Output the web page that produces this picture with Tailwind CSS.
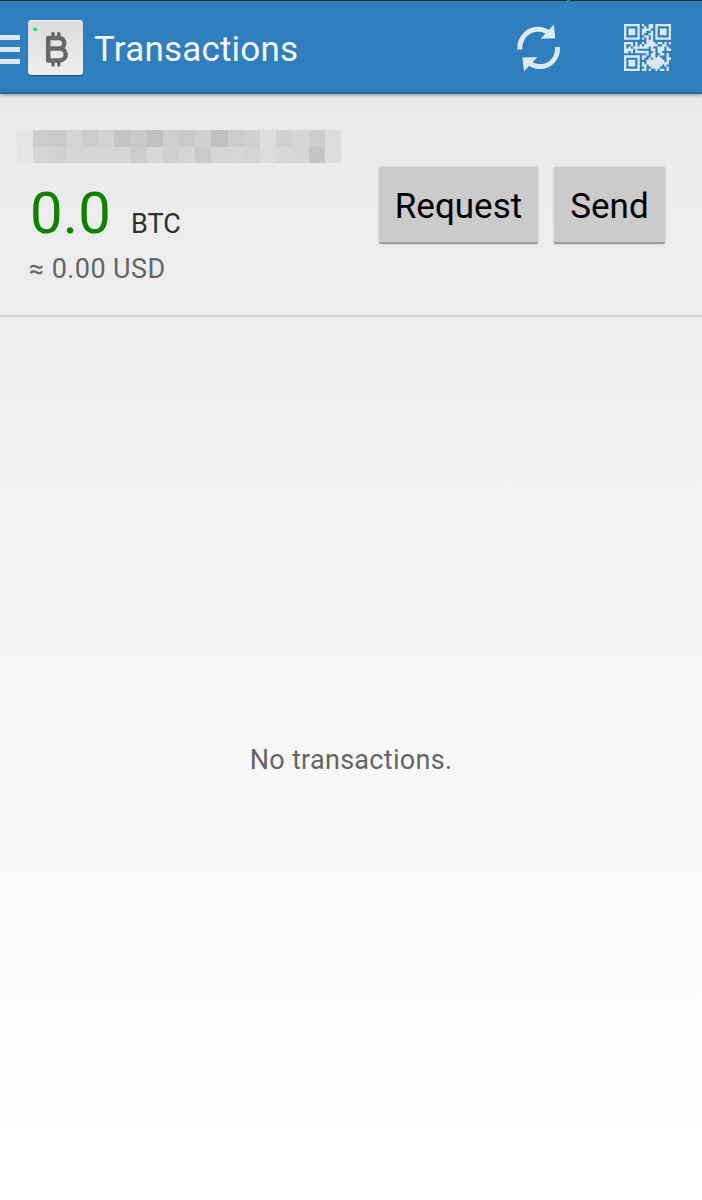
<!DOCTYPE html>
<html lang="en">
<head>
    <meta charset="UTF-8">
    <meta name="viewport" content="width=device-width, initial-scale=1.0">
    <title>Transactions</title>
    <script src="https://cdn.jsdelivr.net/npm/@tailwindcss/browser@4"></script>
</head>
<body class="h-[1200px] w-[702px] overflow-hidden bg-white font-['Roboto',sans-serif]">
    <div class="flex h-full flex-col bg-linear-to-b from-[#eaeaea] from-8% via-[#f0f0f0] via-35% to-white to-96%">
        <!-- Action bar -->
        <header class="relative z-10 flex h-[94px] shrink-0 items-center border-t border-[#252a30] border-b-2 border-b-[#296da5] bg-[#2f7ebe] shadow-[0_1px_4px_rgba(0,0,0,0.4)]">
            <div class="absolute -top-px left-[567px] h-px w-[3px] bg-[#08a020]"></div>
            <button class="mt-[5px] flex w-5 flex-col gap-[7px]" aria-label="Menu">
                <span class="h-[5px] bg-[#dbe8f3]"></span>
                <span class="h-[5px] bg-[#dbe8f3]"></span>
                <span class="h-[5px] bg-[#dbe8f3]"></span>
            </button>
            <svg class="mt-[2px] ml-2 h-[55px] w-[55px] rounded-[3px] shadow-[0_1px_1px_rgba(0,0,0,0.4)]" viewBox="0 0 55 55">
                <defs>
                    <linearGradient id="tile" x1="0" y1="0" x2="0" y2="1">
                        <stop offset="0" stop-color="#dcdcdc"/>
                        <stop offset="1" stop-color="#efefef"/>
                    </linearGradient>
                </defs>
                <rect width="55" height="55" rx="2" fill="url(#tile)"/>
                <path d="M2 .7h51" stroke="#f4f4f4" stroke-width="1.2"/>
                <circle cx="7.2" cy="9.2" r="1.9" fill="#12e27b"/>
                <g fill="none" stroke="#686868" stroke-linejoin="round" stroke-linecap="round">
                    <path d="M25 13.500v4M30.800 13.500v4M25 41v4M30.800 41v4" stroke-width="3.500"/>
                    <path d="M20.200 17.900H31a5.300 5.300 0 0 1 0 10.600H21M31.700 28.500a6 6 0 0 1 0 12H20.200V17.900" stroke-width="4.500"/>
                </g>
            </svg>
            <h1 class="mt-[7px] ml-[11px] w-[205px] text-[35px] leading-[42px] tracking-[0.2px] whitespace-nowrap text-[#f3f6f9]">Transactions</h1>
            <button class="mt-[2px] ml-[217px]" aria-label="Refresh">
                <svg class="h-[50px] w-[46px]" viewBox="0 0 46 50">
                    <g fill="none" stroke="#dce8f2" stroke-width="5">
                        <path d="M3.800 26.500C3.300 14.500 12 6.300 21.800 6.300c5.600 0 10.200 2.200 13.400 6"/>
                        <path d="M41.500 24C42.300 35.500 33.800 43.600 24 43.600c-5.600 0-10-2.100-13.500-6.200"/>
                    </g>
                    <path d="M37.900 1.500L39.200 15.200L24.500 15.800ZM8 48.500L6.400 34.500L21.400 34Z" fill="#dce8f2"/>
                </svg>
            </button>
            <button class="mt-[2px] ml-[62px]" aria-label="Show QR code">
                <svg class="h-[47px] w-[47px]" viewBox="0 0 21 21" fill="#dce8f2">
                    <path id="qr"/>
                </svg>
            </button>
        </header>

        <!-- Balance -->
        <section class="flex h-[223px] shrink-0 justify-between border-b-2 border-[#d4d4d4] pr-[37px]">
            <div class="pt-[36px]">
                <div id="mosaic" class="ml-[17px] grid h-[33px] w-[324px] grid-cols-20 grid-rows-2"></div>
                <div class="ml-[30px] flex items-baseline">
                    <span class="mt-[16px] w-[101px] text-[58px] leading-[68px] tracking-[0.2px] text-[#128000]">0.0</span>
                    <span class="text-[27px] text-[#303030]">BTC</span>
                </div>
                <p class="mt-[6px] ml-[29px] text-[27px] leading-8 tracking-[0.4px] whitespace-nowrap text-[#656565]">≈ 0.00 USD</p>
            </div>
            <div class="flex gap-4 pt-[73px] text-[35px] text-black">
                <button class="h-[77px] w-[159px] rounded-[2px] border-b-2 border-[#9b9b9b] bg-[#cbcbcb] pt-[6px] shadow-[0_0_2px_rgba(0,0,0,0.25)]">Request</button>
                <button class="h-[77px] w-[111px] rounded-[2px] border-b-2 border-[#9b9b9b] bg-[#cbcbcb] pt-[6px] shadow-[0_0_2px_rgba(0,0,0,0.25)]">Send</button>
            </div>
        </section>

        <main class="flex flex-1 items-center justify-center pt-[3px]">
            <p class="text-[27px] leading-8 tracking-[0.3px] text-[#656565]">No transactions.</p>
        </main>
    </div>

    <script>
        // QR modules, one character per module
        const qrRows = [
            '#######.#..##.#######',
            '#.....#..#.##.#.....#',
            '#.###.#.####..#.###.#',
            '#.###.#.##..#.#.###.#',
            '#.###.#.#..##.#.###.#',
            '#.....#..##.#.#.....#',
            '#######.#.#.#.#######',
            '..........###........',
            '####.#..#.####.##.#.#',
            '#..#.#.#.######..##..',
            '#.#.#######.#..###.#.',
            '####.#......##.###.##',
            '##.#.######..#.##....',
            '..........#.##..##.#.',
            '#######.##..##.#...#.',
            '#.....#.#..#.####..##',
            '#.###.#...########.#.',
            '#.###.#.#.##########.',
            '#.###.#.##.######.#..',
            '#.....#..#..####...#.',
            '#######.##.#..#.##.#.'
        ];
        document.getElementById('qr').setAttribute('d', qrRows.map((row, y) =>
            [...row].map((c, x) => c === '#' ? `M${x} ${y}h1.04v1.04h-1.04z` : '').join('')).join(''));

        // Pixelated wallet label
        const cells = ('e6 cd ca d4 cd d2 c4 c9 c0 cf ca d0 c0 cd d0 dd d0 d6 cd dc ' +
                       'e6 d5 d1 d5 d5 d6 d6 cd d7 d0 d5 ca d5 d7 d4 dc d7 d6 c4 dd').split(' ');
        document.getElementById('mosaic').innerHTML =
            cells.map(c => `<i style="background:#${c}${c}${c}"></i>`).join('');
    </script>
</body>
</html>
